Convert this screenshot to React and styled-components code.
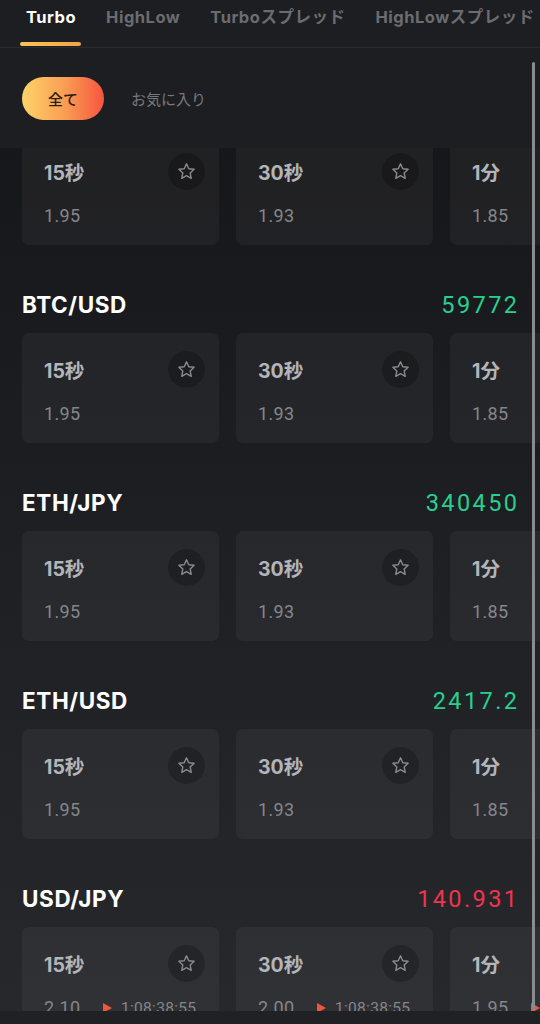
import React from "react";
import styled, { createGlobalStyle } from "styled-components";

const GlobalStyle = createGlobalStyle`
  html, body {
    margin: 0;
    padding: 0;
    background: #1c1e21;
  }
  * {
    box-sizing: border-box;
  }
`;

const Screen = styled.div`
  position: relative;
  width: 540px;
  height: 1024px;
  overflow: hidden;
  display: flex;
  flex-direction: column;
  background: #1c1e21;
  font-family: Inter, "Noto Sans CJK JP", sans-serif;
`;

const TabBar = styled.div`
  display: flex;
  gap: 30px;
  height: 48px;
  padding: 0 0 0 26px;
  border-bottom: 1px solid #2a2c30;
  white-space: nowrap;
  flex-shrink: 0;
`;

const Tab = styled.div`
  position: relative;
  font-size: 16.5px;
  font-weight: 700;
  line-height: 34px;
  letter-spacing: 0.5px;
  color: ${(p) => (p.$active ? "#ffffff" : "#6b6c70")};

  &::after {
    content: "";
    display: ${(p) => (p.$active ? "block" : "none")};
    position: absolute;
    left: -6px;
    right: -5px;
    top: 42px;
    height: 4px;
    border-radius: 2px;
    background: linear-gradient(90deg, #fbc25a, #f3a347);
  }
`;

const FilterBar = styled.div`
  display: flex;
  align-items: center;
  gap: 27px;
  height: 100px;
  padding: 0 22px;
  flex-shrink: 0;
`;

const Pill = styled.div`
  width: 82px;
  height: 43px;
  border-radius: 22px;
  display: flex;
  align-items: center;
  justify-content: center;
  background: linear-gradient(90deg, #fed46a 0%, #f99a52 55%, #f6553f 100%);
  color: #2a1d10;
  font-family: "Noto Sans CJK JP", sans-serif;
  font-size: 15px;
  font-weight: 500;
`;

const FilterLink = styled.div`
  color: #77787c;
  font-family: "Noto Sans CJK JP", sans-serif;
  font-size: 15px;
`;

const Content = styled.div`
  flex: 1;
  overflow: hidden;
  background: linear-gradient(180deg, #16171a 0%, #1f2024 50%, #27282c 100%);
`;

const List = styled.div`
  margin-top: -13px;
`;

const Section = styled.div``;

const SectionHead = styled.div`
  height: 88px;
  display: flex;
  align-items: flex-end;
  justify-content: space-between;
  padding: 0 23px 15px 22px;
`;

const Pair = styled.div`
  color: #ffffff;
  font-size: 22.5px;
  font-weight: 700;
  line-height: 26px;
  letter-spacing: 0.6px;
`;

const Price = styled.div`
  font-family: Roboto, "Noto Sans", sans-serif;
  font-size: 23.5px;
  line-height: 26px;
  letter-spacing: 2.4px;
  margin-right: -2.4px;
  color: ${(p) => (p.$down ? "#f0344f" : "#27d08f")};
`;

const CardRow = styled.div`
  display: flex;
  gap: 17px;
  padding-left: 22px;
  overflow: hidden;
`;

const Card = styled.div`
  position: relative;
  flex: 0 0 197px;
  height: 110px;
  border-radius: 7px;
  background: rgba(255, 255, 255, 0.045);
  padding: 23px 0 0 22px;
`;

const Term = styled.div`
  color: #b4b5b9;
  font-family: Inter, "Noto Sans CJK JP", sans-serif;
  font-size: 19.5px;
  font-weight: 700;
  line-height: 30px;
`;

const Meta = styled.div`
  display: flex;
  align-items: center;
  margin-top: 17px;
  font-family: Roboto, "Noto Sans", sans-serif;
`;

const Payout = styled.div`
  color: #85868a;
  font-size: 18px;
  line-height: 22px;
  letter-spacing: 0.3px;
  width: 59px;
`;

const Timer = styled.div`
  display: flex;
  align-items: center;
  gap: 9px;
  color: #85868a;
  font-size: 15.5px;
  letter-spacing: 0.3px;
  white-space: nowrap;
`;

const Play = styled.span`
  width: 0;
  height: 0;
  border-top: 5px solid transparent;
  border-bottom: 5px solid transparent;
  border-left: 9px solid #f2543c;
`;

const StarBtn = styled.div`
  position: absolute;
  top: 18px;
  right: 14px;
  width: 37px;
  height: 37px;
  border-radius: 50%;
  background: rgba(0, 0, 0, 0.22);
  display: flex;
  align-items: center;
  justify-content: center;
`;

const BottomBar = styled.div`
  height: 13px;
  background: #202125;
  flex-shrink: 0;
`;

const Scrollbar = styled.div`
  position: absolute;
  right: 5px;
  top: 62px;
  bottom: 14px;
  width: 3px;
  border-radius: 2px;
  background: #8a8b8e;
`;

const Star = () => (
  <svg width="21" height="21" viewBox="0 0 24 24" fill="none">
    <path
      d="M12 3.2l2.6 5.6 6.1.7-4.5 4.2 1.2 6.1L12 16.8l-5.4 3 1.2-6.1-4.5-4.2 6.1-.7z"
      stroke="#8a8b8f"
      strokeWidth="1.6"
      strokeLinejoin="round"
    />
  </svg>
);

const terms = ["15秒", "30秒", "1分"];

const sections = [
  { pair: null, payouts: ["1.95", "1.93", "1.85"] },
  { pair: "BTC/USD", price: "59772", payouts: ["1.95", "1.93", "1.85"] },
  { pair: "ETH/JPY", price: "340450", payouts: ["1.95", "1.93", "1.85"] },
  { pair: "ETH/USD", price: "2417.2", payouts: ["1.95", "1.93", "1.85"] },
  {
    pair: "USD/JPY",
    price: "140.931",
    down: true,
    payouts: ["2.10", "2.00", "1.95"],
    timer: "1:08:38:55",
  },
];

export default function App() {
  return (
    <Screen>
      <GlobalStyle />
      <TabBar>
        <Tab $active>Turbo</Tab>
        <Tab>HighLow</Tab>
        <Tab>Turboスプレッド</Tab>
        <Tab>HighLowスプレッド</Tab>
      </TabBar>
      <FilterBar>
        <Pill>全て</Pill>
        <FilterLink>お気に入り</FilterLink>
      </FilterBar>
      <Content>
        <List>
          {sections.map((s, i) => (
            <Section key={i}>
              {s.pair && (
                <SectionHead>
                  <Pair>{s.pair}</Pair>
                  <Price $down={s.down}>{s.price}</Price>
                </SectionHead>
              )}
              <CardRow>
                {terms.map((t, j) => (
                  <Card key={t}>
                    <Term>{t}</Term>
                    <Meta>
                      <Payout>{s.payouts[j]}</Payout>
                      {s.timer && (
                        <Timer>
                          <Play />
                          {s.timer}
                        </Timer>
                      )}
                    </Meta>
                    <StarBtn>
                      <Star />
                    </StarBtn>
                  </Card>
                ))}
              </CardRow>
            </Section>
          ))}
        </List>
      </Content>
      <BottomBar />
      <Scrollbar />
    </Screen>
  );
}
